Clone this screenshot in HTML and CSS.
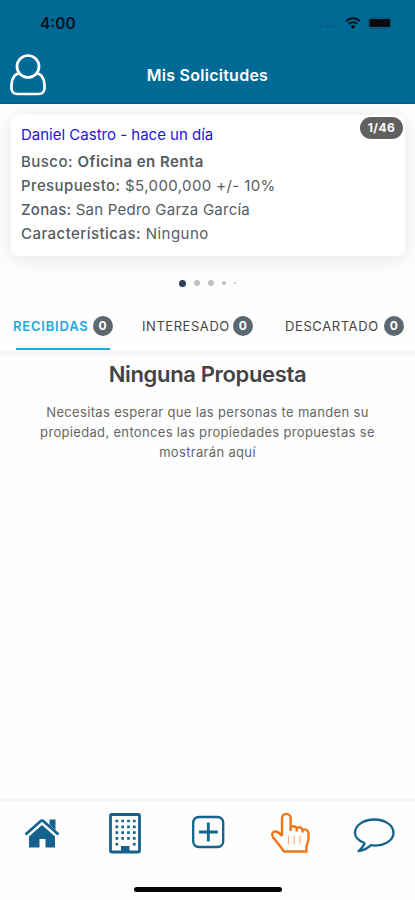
FILE: index.html
```html
<!DOCTYPE html>
<html lang="es">
<head>
  <meta charset="UTF-8" />
  <meta name="viewport" content="width=device-width, initial-scale=1.0"/>
  <title>Mis Solicitudes</title>
  <link rel="stylesheet" href="styles.css">
</head>
<body>
  <header class="header">
    <div class="status-bar">
      <span class="time">4:00</span>
      <div class="status-icons">
        <svg class="signal" width="19" height="3" viewBox="0 0 19 3">
          <path d="M1 1.5h3M6 1.5h3M11 1.5h3M16 1.5h2"/>
        </svg>
        <svg class="wifi" width="16" height="12" viewBox="0 0 16 12">
          <path d="M1 4.2a10 10 0 0 1 14 0M3.7 7a6.2 6.2 0 0 1 8.6 0"/>
          <path class="solid" d="M8 12L5.6 9.4a3.4 3.4 0 0 1 4.8 0z"/>
        </svg>
        <svg class="battery" width="26" height="12" viewBox="0 0 26 12">
          <rect class="case" x=".5" y=".5" width="22.5" height="11" rx="3"/>
          <rect x="1.5" y="2" width="20.5" height="8" rx="1"/>
          <path class="tip" d="M24 4q2 2 0 4z"/>
        </svg>
      </div>
    </div>
    <div class="title-bar">
      <svg class="user" width="36" height="42" viewBox="0 0 36 42">
        <path d="M10 19C5 19.5 1.5 24.5 1.5 31V34.5C1.5 38 4 40 7.5 40H28.5C32 40 34.5 38 34.5 34.5V31C34.5 24.5 31 19.5 26 19"/>
        <circle cx="18" cy="12.5" r="11"/>
      </svg>
      <h1>Mis Solicitudes</h1>
    </div>
  </header>

  <main>
    <section class="card">
      <span class="counter">1/46</span>
      <p class="author">Daniel Castro - hace un día</p>
      <p><b>Busco:</b> <strong>Oficina en Renta</strong></p>
      <p class="presupuesto"><b>Presupuesto:</b> $5,000,000 +/- 10%</p>
      <p class="zonas"><b>Zonas:</b> San Pedro Garza García</p>
      <p><b>Características:</b> Ninguno</p>
    </section>

    <div class="dots">
      <i class="dot active"></i>
      <i class="dot"></i>
      <i class="dot"></i>
      <i class="dot small"></i>
      <i class="dot tiny"></i>
    </div>

    <nav class="tabs">
      <div class="tab selected"><span>RECIBIDAS</span><span class="badge">0</span></div>
      <div class="tab"><span>INTERESADO</span><span class="badge">0</span></div>
      <div class="tab descartado"><span>DESCARTADO</span><span class="badge">0</span></div>
    </nav>

    <section class="empty">
      <h2>Ninguna Propuesta</h2>
      <p>Necesitas esperar que las personas te manden su<br>propiedad, entonces las propiedades propuestas se<br>mostrarán aquí</p>
    </section>
  </main>

  <footer class="footer">
    <nav class="menu">
      <!-- inicio -->
      <svg width="42" height="42" viewBox="0 0 42 42">
        <path class="fill" d="M8 24.5L21 13 34 24.5V35.500H24.500V27H18.500V35.500H8z"/>
        <path class="fill" d="M28.5 7.5H34.500V18L28.500 12.500z"/>
        <path class="roof" d="M4.5 22.5L19.500 9.200Q21 8 22.500 9.200L37.500 22.500"/>
      </svg>
      <!-- edificio -->
      <svg width="42" height="42" viewBox="0 0 42 42">
        <rect class="line building" x="6.5" y="2.500" width="29" height="37.500" rx="1"/>
        <path class="windows" d="M11.5 9H32M11.500 14.800H32M11.500 20.600H32M11.500 26.400H32"/>
        <path class="fill" d="M11.5 31h2.700v2.500h-2.700zM28.900 31h2.700v2.500h-2.700zM17 34h8.500v6h-8.500z"/>
      </svg>
      <!-- agregar -->
      <svg width="42" height="42" viewBox="0 0 42 42">
        <rect class="line" x="6.2" y="5" width="30" height="30" rx="5.5"/>
        <path class="line plus" d="M21.3 10.5v19M12 20h18.800"/>
      </svg>
      <!-- solicitudes -->
      <svg class="hand" width="42" height="42" viewBox="0 0 42 42">
        <path d="M12 24V6.2a4.300 4.300 0 0 1 8.600 0V15.500C22.500 13.500 26 13.800 26.700 16.500C28.500 14.500 32 15 32.500 18C35 16.500 38.500 18 38.500 21.500V27.500L36.500 34.500V39.500H14L10 34 3.200 25.500C1 22.500 2.500 19 6 19.500C9 20 10.500 22 12 24M20.600 15v4M26.700 16.500v3M32.500 18v2.500"/>
        <path class="thin" d="M18.5 23.500v9M24.200 23.500v9M30 23.500v9"/>
      </svg>
      <!-- mensajes -->
      <svg width="42" height="42" viewBox="0 0 42 42">
        <path class="line" d="M11.5 31C5.500 28.800 2 25 2 20.800C2 13.500 10.500 7.500 21.300 7.500S40.500 13.500 40.500 20.800C40.500 29 30 35 18 33.200C14.500 36.500 10.500 38.500 5.500 39.200C8.500 36.500 10.800 34.500 11.500 31z"/>
      </svg>
    </nav>
    <div class="home-indicator"></div>
  </footer>
</body>
</html>
```

FILE: styles.css
```css
* {
  box-sizing: border-box;
}

body {
  margin: 0;
  height: 900px;
  display: flex;
  flex-direction: column;
  background: #fefefe;
  color: #555c62;
  font-family: Inter, sans-serif;
  overflow: hidden;
}

h1, h2, p {
  margin: 0;
}

svg {
  display: block;
  fill: none;
}

.header {
  height: 104px;
  background: #006a96;
  border-bottom: 1px solid #005c8c;
}

.status-bar {
  height: 46px;
  padding: 0 21px 0 40px;
  display: flex;
  align-items: center;
  justify-content: space-between;
}

.time {
  color: #07141b;
  font-size: 15.5px;
  font-weight: 600;
}

.status-icons {
  display: flex;
  align-items: center;
  gap: 7px;
}

.signal {
  margin-top: 7px;
  stroke: #075574;
  stroke-width: 1.5;
}

.wifi {
  stroke: #07141b;
  stroke-width: 2;
}

.wifi .solid,
.battery {
  fill: #050b0f;
  stroke: none;
}

.battery .case {
  fill: none;
  stroke: #075574;
}

.battery .tip {
  fill: #075574;
}

.title-bar {
  height: 58px;
  padding: 8px 10px;
  display: grid;
  grid-template-columns: 36px 1fr 36px;
}

.user {
  stroke: #fff;
  stroke-width: 2.7;
}

h1 {
  color: #fff;
  font-size: 16px;
  line-height: 42px;
  font-weight: 600;
  letter-spacing: .26px;
  text-align: center;
}

.card {
  position: relative;
  height: 141px;
  margin: 11px 10px 0 11px;
  padding: 6px 10px;
  border-radius: 8px;
  background: #fff;
  box-shadow: 0 3px 22px rgba(0, 0, 0, .1);
  font-size: 15px;
  line-height: 24.2px;
  letter-spacing: .45px;
}

.card b {
  font-weight: 500;
}

.card strong {
  font-weight: 600;
}

.card .author {
  color: #2115dc;
  line-height: 28.6px;
  letter-spacing: 0;
}

.card .presupuesto {
  letter-spacing: .39px;
}

.card .zonas {
  letter-spacing: .24px;
}

.counter {
  position: absolute;
  top: 2px;
  right: 2px;
  width: 43px;
  height: 22px;
  border-radius: 11px;
  background: #606060;
  color: #fff;
  font-size: 12px;
  font-weight: 700;
  line-height: 22px;
  text-align: center;
}

.dots {
  height: 8px;
  margin: 23px 0 0 179px;
  display: flex;
  align-items: center;
  gap: 8px;
}

.dot {
  width: 6px;
  height: 6px;
  border-radius: 50%;
  background: #bfc2c5;
}

.dot.active {
  width: 7px;
  height: 7px;
  background: #2e4057;
}

.dot.small {
  width: 4px;
  height: 4px;
}

.dot.tiny {
  width: 2px;
  height: 2px;
}

.tabs {
  height: 69px;
  padding-top: 29px;
  display: grid;
  grid-template-columns: 127px 142px 1fr;
  border-bottom: 6px solid #f7f7f7;
  font-size: 13px;
  color: #444;
  letter-spacing: .55px;
}

.tab {
  display: flex;
  align-items: flex-start;
  gap: 3px;
  padding-left: 15px;
  line-height: 20px;
}

.tab.descartado {
  padding-left: 16px;
  gap: 5px;
  letter-spacing: .6px;
}

.tab.selected {
  position: relative;
  padding-left: 13px;
  gap: 4px;
  color: #20a9e0;
  font-weight: 600;
  letter-spacing: .8px;
}

.tab.selected::after {
  content: "";
  position: absolute;
  left: 16px;
  bottom: 0;
  width: 94px;
  height: 2px;
  background: #20a9e0;
}

.badge {
  width: 20px;
  height: 20px;
  border-radius: 50%;
  background: #5c6870;
  color: #fff;
  font-size: 12px;
  font-weight: 700;
  letter-spacing: 0;
  text-align: center;
}

.empty {
  padding-top: 4px;
  text-align: center;
}

h2 {
  font-size: 22px;
  line-height: 28px;
  font-weight: 600;
  letter-spacing: -.35px;
  color: #444;
}

.empty p {
  margin-top: 14px;
  color: #666;
  font-size: 13px;
  line-height: 20.2px;
  letter-spacing: .33px;
}

.footer {
  height: 101px;
  margin-top: auto;
  border-top: 2px solid #f5f5f5;
}

.menu {
  height: 85px;
  padding-top: 11px;
  display: grid;
  grid-template-columns: repeat(5, 1fr);
  justify-items: center;
  align-items: start;
}

.menu .fill {
  fill: #14628d;
}

.menu .line {
  stroke: #14628d;
  stroke-width: 2.3;
  stroke-linejoin: round;
}

.menu .building {
  stroke-width: 2.8;
}

.menu .plus {
  stroke-width: 2.8;
}

.roof {
  stroke: #14628d;
  stroke-width: 2.8;
}

.windows {
  stroke: #14628d;
  stroke-width: 2.7;
  stroke-dasharray: 2.7 3.1;
}

.hand {
  stroke: #ef7618;
  stroke-width: 2.4;
  stroke-linejoin: round;
}

.hand .thin {
  stroke: #f5b184;
  stroke-width: 1.2;
}

.home-indicator {
  width: 148px;
  height: 5px;
  margin: 1px auto 0;
  border-radius: 3px;
  background: #050505;
}
```
